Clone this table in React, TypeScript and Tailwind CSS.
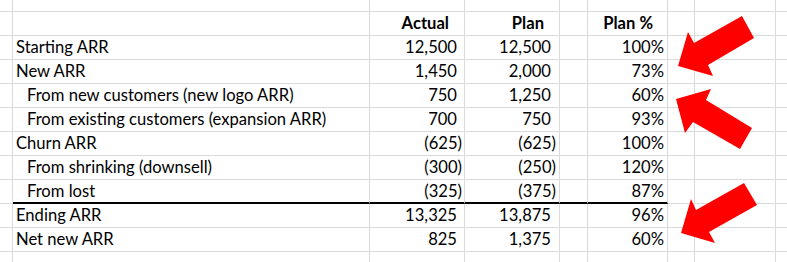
import React from 'react';

type Row = {
  label: string;
  indent?: boolean;
  actual: string;
  plan: string;
  pct: string;
  ruleBelow?: boolean;
};

const rows: Row[] = [
  { label: 'Starting ARR', actual: '12,500', plan: '12,500', pct: '100%' },
  { label: 'New ARR', actual: '1,450', plan: '2,000', pct: '73%' },
  { label: 'From new customers (new logo ARR)', indent: true, actual: '750', plan: '1,250', pct: '60%' },
  { label: 'From existing customers (expansion ARR)', indent: true, actual: '700', plan: '750', pct: '93%' },
  { label: 'Churn ARR', actual: '(625)', plan: '(625)', pct: '100%' },
  { label: 'From shrinking (downsell)', indent: true, actual: '(300)', plan: '(250)', pct: '120%' },
  { label: 'From lost', indent: true, actual: '(325)', plan: '(375)', pct: '87%', ruleBelow: true },
  { label: 'Ending ARR', actual: '13,325', plan: '13,875', pct: '96%' },
  { label: 'Net new ARR', actual: '825', plan: '1,375', pct: '60%' },
];

const cell = 'border-r border-b border-[#dadada] leading-[23px] whitespace-nowrap';
const rule = 'border-b-2 border-b-black';

const neg = (v: string) => v.startsWith('(');

function EmptyRow({ last }: { last?: boolean }) {
  const cols = [0, 1, 2, 3, 4, 5, 6, 7];
  return (
    <>
      {cols.map((c) => (
        <div key={c} className={last ? 'border-r border-[#dadada]' : cell} />
      ))}
      <div className={last ? '' : 'border-b border-[#dadada]'} />
    </>
  );
}

const Arrows: React.FC = () => (
  <svg
    className="absolute inset-0 pointer-events-none"
    width="787"
    height="262"
    viewBox="0 0 787 262"
  >
    <polygon
      fill="#ff0000"
      points="678,66 688,32 694,43 742,16 754,38 708,65 713,76"
    />
    <polygon
      fill="#ff0000"
      points="676,99 711,89 706,100 752,128 740,149 693,122 685,133"
    />
    <polygon
      fill="#ff0000"
      points="681,233 691,199 696,210 744,183 757,205 709,232 715,243"
    />
  </svg>
);

const App: React.FC = () => {
  return (
    <div className="relative w-[787px] h-[262px] overflow-hidden bg-white text-black font-['Lato',sans-serif] text-[16.6px]">
      <div className="grid grid-cols-[13px_357px_95px_95px_28px_80px_27px_81px_11px] grid-rows-[12px_repeat(10,24px)_10px]">
        <EmptyRow />

        {/* header */}
        <div className={cell} />
        <div className={cell} />
        <div className={`${cell} text-right pr-[15px] font-bold`}>Actual</div>
        <div className={`${cell} text-right pr-[15px] font-bold`}>Plan</div>
        <div className={cell} />
        <div className={`${cell} text-right pr-[14px] font-bold`}>Plan %</div>
        <div className={cell} />
        <div className={cell} />
        <div className="border-b border-[#dadada]" />

        {rows.map((r) => (
          <React.Fragment key={r.label}>
            <div className={cell} />
            <div className={`${cell} ${r.indent ? 'pl-[14px]' : 'pl-[3px]'} ${r.ruleBelow ? rule : ''}`}>
              {r.label}
            </div>
            <div className={`${cell} text-right ${neg(r.actual) ? 'pr-[2px]' : 'pr-[7px]'} ${r.ruleBelow ? rule : ''}`}>
              {r.actual}
            </div>
            <div className={`${cell} text-right ${neg(r.plan) ? 'pr-[3px]' : 'pr-[8px]'} ${r.ruleBelow ? rule : ''}`}>
              {r.plan}
            </div>
            <div className={`${cell} ${r.ruleBelow ? rule : ''}`} />
            <div className={`${cell} text-right pr-[3px] ${r.ruleBelow ? rule : ''}`}>{r.pct}</div>
            <div className={cell} />
            <div className={cell} />
            <div className="border-b border-[#dadada]" />
          </React.Fragment>
        ))}

        <EmptyRow last />
      </div>
      <Arrows />
    </div>
  );
};

export default App;
